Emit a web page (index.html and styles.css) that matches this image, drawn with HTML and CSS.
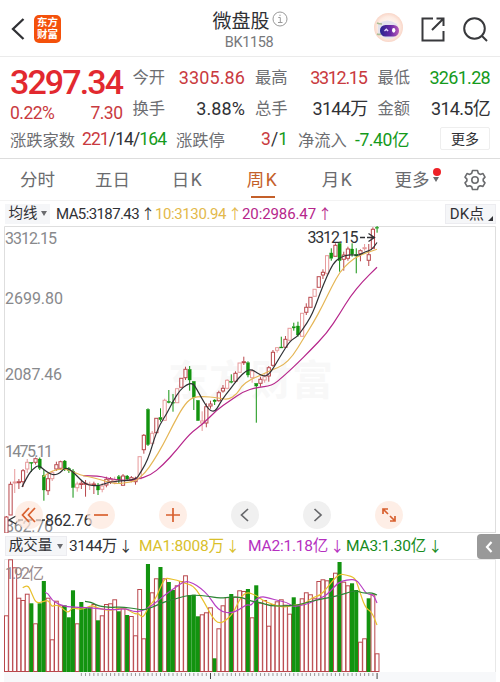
FILE: index.html
```html
<!DOCTYPE html>
<html lang="zh-CN">
<head>
    <meta charset="UTF-8">
    <meta name="viewport" content="width=device-width, initial-scale=1.0">
    <title>微盘股 BK1158</title>
    <link rel="stylesheet" href="styles.css">
</head>
<body>
    <header class="topbar">
        <div class="topbar-left">
            <svg class="back" width="14" height="24" viewBox="0 0 14 24"><path d="M12.5 2 2 12l10.500 10"/></svg>
            <div class="logo"><span>东方</span><span>财富</span></div>
        </div>
        <div class="title">
            <h1>微盘股<svg width="16" height="16" viewBox="0 0 16 16"><circle cx="8" cy="8" r="7"/><path d="M6.300 6.500h2v5M6 11.500h4.500M8 3.700v1.300"/></svg></h1>
            <p>BK1158</p>
        </div>
        <div class="topbar-right">
            <svg width="32" height="32" viewBox="0 0 32 32">
                <defs>
                    <linearGradient id="visor"><stop offset="0" stop-color="#28258f"/><stop offset=".55" stop-color="#6628a5"/><stop offset="1" stop-color="#b95bb8"/></linearGradient>
                    <radialGradient id="head"><stop offset="0" stop-color="#fff"/><stop offset=".75" stop-color="#fdebe2"/><stop offset="1" stop-color="#f9d6c8"/></radialGradient>
                </defs>
                <circle cx="14.500" cy="14.500" r="14.500" fill="url(#head)"/>
                <path d="M4 11q9-7 19 0l2 7q-5 10-14 7L4 21z" fill="#e3e2ed"/>
                <path d="M3 10q2 1 5 1M3 21q2 1 4 0" fill="none" stroke="#a9bd92" stroke-width="1.500"/>
                <rect x="6" y="12" width="19" height="11.500" rx="5.500" fill="url(#visor)"/>
                <path d="m10.500 18 1.800-1.800 1.800 1.800" fill="none" stroke="#e4d9ff" stroke-width="1.300"/>
                <ellipse cx="19.700" cy="17.300" rx="1.700" ry="2.400" fill="#fff"/>
            </svg>
            <svg class="line-icon" width="24" height="25" viewBox="0 0 24 25"><path d="M12 1.500H1.500v22H22.500V14M15.500 1.500h7V9M22.300 1.700 11 13"/></svg>
            <svg class="line-icon" width="25" height="25" viewBox="0 0 25 25"><circle cx="11.500" cy="11.500" r="10.300"/><path d="m19 19 5 5"/></svg>
        </div>
    </header>

    <section class="quote">
        <div class="quote-grid">
            <div class="last up">3297.34</div>
            <div class="cell"><span>今开</span><b class="up wide">3305.86</b></div>
            <div class="cell"><span>最高</span><b class="up tight">3312.15</b></div>
            <div class="cell"><span>最低</span><b class="down snug">3261.28</b></div>
            <div class="change up"><span>0.22%</span><span>7.30</span></div>
            <div class="cell"><span>换手</span><b class="wide">3.88%</b></div>
            <div class="cell"><span>总手</span><b class="snug">3144万</b></div>
            <div class="cell"><span>金额</span><b class="snug">314.5亿</b></div>
        </div>
        <div class="quote-row">
            <span class="label counts-label">涨跌家数</span>
            <span class="counts"><i class="up">221</i>/14/<i class="down">164</i></span>
            <span class="label limit-label">涨跌停</span>
            <span class="limit"><i class="up">3</i>/<i class="down">1</i></span>
            <span class="label flow-label">净流入</span>
            <span class="flow down">-7.40亿</span>
            <button class="more">更多</button>
        </div>
    </section>

    <nav class="tabs">
        <a>分时</a>
        <a>五日</a>
        <a class="k">日K</a>
        <a class="k active">周K</a>
        <a class="k">月K</a>
        <a class="tab-more">更多<i class="caret"></i><i class="dot"></i></a>
        <svg width="22" height="22" viewBox="0 0 22 22"><path d="M8.500 1.500h5l.8 2.800 1.900 1.100 2.800-.8 2 3.500-1.800 2v1.800l1.800 2-2 3.500-2.800-.7-1.900 1.100-.8 2.700h-5l-.8-2.700-1.900-1.100-2.800.7-2-3.500 1.900-2v-1.800l-1.900-2 2-3.500 2.800.8 1.900-1.100z"/><circle cx="11" cy="11" r="3.200"/></svg>
    </nav>

    <div class="indicator">
        <span class="chip">均线<i class="caret"></i></span>
        <span class="ma ma5">MA5:3187.43<em>↑</em></span>
        <span class="ma ma10">10:3130.94<em>↑</em></span>
        <span class="ma ma20">20:2986.47<em>↑</em></span>
        <span class="chip dk">DK点<i class="corner"></i></span>
    </div>

    <section class="price">
        <svg id="priceChart" width="492" height="307" viewBox="4 226 492 307"></svg>
        <div class="tools">
            <button><svg viewBox="0 0 28 28"><path d="m14 7-6.500 7 6.500 7M20 7l-6.500 7 6.500 7"/></svg></button>
            <button><svg viewBox="0 0 28 28"><path d="M7 14h14"/></svg></button>
            <button><svg viewBox="0 0 28 28"><path d="M7 14h14M14 7v14"/></svg></button>
            <button class="gray"><svg viewBox="0 0 28 28"><path d="m17 8-6.500 6 6.500 6"/></svg></button>
            <button class="gray"><svg viewBox="0 0 28 28"><path d="m11.500 8 6.500 6-6.500 6"/></svg></button>
            <button><svg viewBox="0 0 28 28"><path d="M8 13V8h5M8 8l5 5M20 15v5h-5M20 20l-5-5"/></svg></button>
        </div>
    </section>

    <div class="indicator volume-head">
        <span class="chip">成交量<i class="caret"></i></span>
        <span class="ma vol">3144万<em>↓</em></span>
        <span class="ma v1">MA1:8008万<em>↓</em></span>
        <span class="ma v2">MA2:1.18亿<em>↓</em></span>
        <span class="ma v3">MA3:1.30亿<em>↓</em></span>
        <span class="drawer"><svg width="8" height="12" viewBox="0 0 8 12"><path d="M6.500 1 2 6l4.500 5"/></svg></span>
    </div>

    <section class="volume">
        <svg id="volumeChart" width="492" height="123" viewBox="4 559 492 123"></svg>
    </section>

    <script src="chart.js"></script>
</body>
</html>
```

FILE: styles.css
```css
* {
    box-sizing: border-box;
}

body {
    margin: 0;
    width: 500px;
    height: 682px;
    overflow: hidden;
    background: #fff;
    color: #303135;
    font-family: Roboto, "Noto Sans CJK SC", sans-serif;
}

h1, p {
    margin: 0;
    font-weight: 400;
}

i, em, b {
    font-style: normal;
    font-weight: 400;
}

svg {
    display: block;
}

button {
    padding: 0;
    border: 0;
    font-family: inherit;
}

.up {
    color: #c93a40;
}

.down {
    color: #159a1c;
}

/* top bar */
.topbar {
    display: grid;
    grid-template-columns: 125px 1fr 125px;
    align-items: center;
    height: 57px;
    border-bottom: 1px solid #ebebeb;
}

.topbar-left {
    display: flex;
    align-items: center;
    gap: 9px;
    padding: 2px 0 0 11px;
}

.back {
    fill: none;
    stroke: #303135;
    stroke-width: 2.3;
}

.logo {
    display: flex;
    flex-direction: column;
    justify-content: center;
    align-items: center;
    width: 27px;
    height: 28px;
    border-radius: 5px;
    background: #f4510b;
    color: #fff;
    font-size: 10.5px;
    font-weight: 700;
    line-height: 12px;
}

.title {
    text-align: center;
}

.title h1 {
    display: flex;
    justify-content: center;
    align-items: center;
    gap: 2px;
    height: 27px;
    padding-top: 3px;
    font-size: 19px;
}

.title h1 svg {
    fill: none;
    stroke: #999;
    stroke-width: 1;
}

.title p {
    padding-right: 2px;
    height: 21px;
    line-height: 24px;
    color: #77787b;
    font-size: 14.5px;
    letter-spacing: -0.4px;
}

.topbar-right {
    display: flex;
    align-items: center;
    gap: 15px;
    padding-top: 2px;
    margin-left: -1px;
}

.line-icon {
    fill: none;
    stroke: #38393c;
    stroke-width: 2;
}

.line-icon:last-child {
    margin-left: 3px;
}

/* quote */
.quote {
    height: 102px;
    padding: 5px 10px 0;
    border-bottom: 1px solid #ddd;
}

.quote-grid {
    display: grid;
    grid-template-columns: repeat(4, 1fr);
    grid-template-rows: 31px 31px;
    column-gap: 10px;
}

.last {
    color: #e2292f;
    font-size: 34px;
    font-weight: 500;
    line-height: 41px;
    letter-spacing: -1.9px;
    white-space: nowrap;
}

.cell, .change {
    display: flex;
    justify-content: space-between;
    min-width: 0;
    line-height: 31px;
    white-space: nowrap;
}

.cell span, .label {
    color: #6d6e72;
    font-size: 16.3px;
}

.cell b {
    font-size: 18px;
    letter-spacing: -0.2px;
}

.cell b.wide {
    letter-spacing: 0.1px;
}

.cell b.snug {
    letter-spacing: -0.7px;
}

.cell b.tight {
    letter-spacing: -1.3px;
    margin-right: 1px;
}

.change {
    padding-top: 5px;
    font-size: 17.5px;
    letter-spacing: -0.5px;
}

.quote-row {
    display: flex;
    align-items: center;
    height: 31px;
    padding-bottom: 2px;
    font-size: 17.5px;
    white-space: nowrap;
}

.counts-label {
    width: 72px;
}

.counts {
    width: 94px;
    letter-spacing: -0.9px;
}

.limit-label {
    width: 77px;
}

.limit {
    width: 35px;
    text-align: right;
}

.flow-label {
    width: 57px;
    margin-left: 10px;
}

.flow {
    letter-spacing: -0.4px;
}

.more {
    margin-left: auto;
    width: 50px;
    height: 23px;
    border: 1px solid #eee;
    border-radius: 2px;
    background: #fff;
    color: #303135;
    font-size: 14px;
    line-height: 20px;
}

/* period tabs */
.tabs {
    display: grid;
    grid-template-columns: repeat(6, 75px) 50px;
    align-items: center;
    height: 42px;
    border-bottom: 1px solid #f3f3f3;
    color: #6a6b6e;
    font-size: 17.5px;
    text-align: center;
}

.tabs a {
    height: 41px;
    line-height: 42px;
}

.tabs .k {
    letter-spacing: 1.5px;
}

.tabs .active {
    color: #c4602a;
    background: linear-gradient(#c4602a, #c4602a) center 37px / 24px 2px no-repeat;
}

.tabs svg {
    margin: 0 0 0 14px;
    fill: none;
    stroke: #6a6b6e;
    stroke-width: 1.6;
    stroke-linejoin: round;
}

.caret {
    display: inline-block;
    border: 3px solid transparent;
    border-top: 5px solid #6a6b6e;
    border-bottom: 0;
}

.tab-more {
    position: relative;
    padding-left: 8px;
}

.tab-more .caret {
    margin-left: 3px;
    vertical-align: 4px;
}

.tab-more .dot {
    position: absolute;
    top: 9px;
    right: 9px;
    width: 8px;
    height: 8px;
    border-radius: 50%;
    background: #ee2127;
}

/* indicator rows */
.indicator {
    position: relative;
    display: flex;
    align-items: center;
    height: 25px;
    padding: 0 4px 0 5px;
    font-size: 15px;
    line-height: 20px;
    white-space: nowrap;
}

.chip {
    display: flex;
    justify-content: center;
    align-items: center;
    gap: 3px;
    width: 45px;
    height: 20px;
    background: #f5f6f8;
    font-size: 14.5px;
}

.ma {
    height: 22px;
}

.ma em {
    display: inline-block;
    width: 11px;
    margin-left: 2px;
    font-family: "Noto Sans CJK SC", sans-serif;
    font-size: 14px;
    letter-spacing: 0;
}

.ma5 {
    width: 99px;
    margin-left: 6px;
    letter-spacing: -0.6px;
}

.ma10 {
    width: 87px;
    color: #e3b94b;
    letter-spacing: -0.4px;
}

.ma20 {
    color: #b6268b;
    letter-spacing: -0.1px;
}

.dk {
    position: relative;
    width: 51px;
    margin-left: auto;
    padding-right: 7px;
    border: 1px solid #ececf0;
    font-size: 15px;
}

.corner {
    position: absolute;
    right: 2px;
    bottom: 2px;
    border-left: 5px solid transparent;
    border-bottom: 5px solid #303135;
}

.price {
    position: relative;
    height: 308px;
    padding-left: 4px;
}

.price text, .volume text {
    font-size: 16px;
}

.tools {
    position: absolute;
    left: 15px;
    top: 275px;
    display: flex;
    gap: 44px;
}

.tools button {
    width: 28px;
    height: 28px;
    border-radius: 50%;
    background: rgba(253, 231, 220, 0.7);
}

.tools .gray {
    background: #f0f0f0;
}

.tools path {
    fill: none;
    stroke: #d8602f;
    stroke-width: 1.7;
}

.tools .gray path {
    stroke: #66676a;
}

.volume-head {
    height: 25px;
    padding: 0 0 1px 5px;
}

.volume-head .chip {
    width: 62px;
    border: 1px solid #ececf0;
    gap: 5px;
    font-size: 14.5px;
}

.volume-head .ma {
    height: 23px;
    font-size: 15.5px;
    letter-spacing: -0.2px;
}

.volume-head .vol {
    width: 70px;
    margin-left: 2px;
    letter-spacing: -0.5px;
}

.volume-head .v1 {
    width: 109px;
    color: #d9c02b;
}

.volume-head .v2 {
    width: 98px;
    color: #b52fc0;
}

.volume-head .v3 {
    color: #168a20;
}

.drawer {
    position: absolute;
    right: 0;
    top: 0;
    display: flex;
    justify-content: center;
    align-items: center;
    width: 23px;
    height: 25px;
    border-radius: 4px 0 0 4px;
    background: #999;
}

.drawer path {
    fill: none;
    stroke: #fff;
    stroke-width: 2.2;
}

.volume {
    padding-left: 4px;
}
```

FILE: chart.js
```js
const NS = 'http://www.w3.org/2000/svg';
const RED = '#b9474c';
const PINK = '#e79a9b';
const GREEN = '#12930f';
const STEP = 4.165;
const FIRST = 6.4;

// [direction, body top, body bottom, high, low]
const candles = [
    ['r',517,533,516,533],['r',484.3,515,481.7,515],['r',482,482.700,469,493],['r',481.700,482.400,479,489],
    ['r',470.7,481.7,469,487],['r',462.300,469,459,473],['g',462.300,463,462,472],['r',458.700,462.300,457.5,464.5],
    ['g',459,468.300,457.5,470],['g',475.300,490,470,500.700],['r',478.700,490.700,473,495],['r',472.700,478.700,470.700,481],
    ['r',464.700,469,461.700,471],['r',461.700,468.300,460.700,470],['g',461,469,460,471],['g',468.300,470.700,467,473],
    ['g',471,487.700,469,497.700],['r',484,487.700,481.700,491.700],['r',483.300,484.500,480,489],['r',483.300,484,480,496.700],
    ['r',484,485,481.700,490],['r',484,484.700,481.700,494],['g',485,490,483,495],['r',486,489.300,483,492.300],
    ['r',479.300,485,476.700,487.300],['r',479,481.700,477,484],['r',480,482.300,476.700,484.300],['g',476.700,480,475,483.300],
    ['r',476,485.300,474,485.300],['g',476,479.300,475,481],['r',477.700,480.300,476,482.300],['r',478.300,481.700,476.700,484.700],
    ['r',456.700,478.700,456.700,478.700],['r',435.300,449.700,434,453.700],['g',409.300,444.700,408.300,446],['r',433.300,443.300,431,444.700],
    ['r',418.300,432.700,418.300,432.700],['g',417.300,419.700,408.300,421.700],['r',400.300,420.300,398.700,420.300],['g',401.300,402.700,390,403.300],
    ['g',402.300,403.300,394,411.700],['r',388.700,402.700,388.700,402.700],['r',378.300,387.300,378.300,387.300],['r',369.300,377.700,366.700,380],
    ['g',369.300,380,366,390.700],['g',381.300,397.700,381.300,410],['g',400.300,420.700,400.300,420.700],['r',421,423,411.300,431],
    ['r',406.700,423,403.300,427.300],['r',404,406,400.700,408.700],['g',400,401.700,399.300,405],['r',392.700,400.700,390.700,401.700],
    ['r',388.300,391,385,392.700],['r',380.300,388.300,379.300,389.300],['g',381.300,382.300,374.300,383.300],['r',373.300,381.300,371.300,382.700],
    ['r',363,372.300,363,372.300],['r',361.700,362.700,356.700,365],['g',362.700,375,361.300,377.300],['r',371,377.700,369.300,382.700],
    ['g',383.300,386,383.300,422.700],['r',379.300,383.300,376.700,386.700],['r',376.700,380,374.300,382.700],['r',367.700,376,366,381.700],
    ['r',352.300,365.300,350,366.700],['r',347.700,350.300,347.300,352.700],['g',347,348,336.700,348],['r',339.300,347.300,336,347.300],
    ['r',328.300,340.300,328.300,340.300],['g',326.700,328,322.700,330.700],['g',326,335,321.700,336.700],['r',313.300,336.300,313.300,336.300],
    ['r',307.300,312.300,303.300,315],['r',297.300,307.300,297.300,307.300],['r',289.300,296.300,289.300,296.300],['r',276.700,287.300,276.700,287.300],
    ['r',272.300,275,269.300,279],['r',255.700,273.300,255.700,275.700],['g',253,258.300,248.300,260.700],['r',245.300,256.300,243.300,256.300],
    ['g',243.300,260.700,241.700,271.700],['r',255,259.300,251.700,270.700],['r',249,258.300,246.700,260.700],['g',249,254.300,243.300,256.700],
    ['g',254.300,256,248.300,273.300],['r',250.700,253.700,249.300,261.300],['r',247.700,248.700,244,250.700],['r',254.700,260.300,244,266],
    ['r',229.300,248.300,227.300,248.300],['g',227.300,228.300,226,232.700]
];

// [direction, top of the bar]
const volumes = [
    ['r',615.3],['r',559.3],['r',567.3],['r',597.7],['r',600],['r',593.7],['g',603.3],['r',623.3],['g',603.3],['g',581],
    ['r',597.7],['r',639.3],['r',600.7],['r',605.3],['g',605.3],['g',617.3],['g',590.3],['r',623.3],['g',602],['g',607.3],
    ['g',607.3],['r',604],['g',620.3],['r',615.3],['r',604],['r',603.3],['r',599.3],['g',611.3],['r',608.3],['g',615],
    ['r',616],['r',635.3],['r',589],['r',638.3],['g',564],['r',592.3],['r',578.3],['g',567],['r',578.3],['g',582],
    ['g',590],['r',585.3],['r',581],['r',575.3],['g',595],['g',594.7],['g',616.3],['r',614.3],['r',612.3],['r',607.3],
    ['g',658.3],['r',628.3],['r',605.3],['r',597],['g',594],['r',596.7],['r',590.3],['r',591],['g',589],['r',617.3],
    ['g',585.3],['r',602.7],['r',600],['r',625.7],['r',604],['r',601.3],['r',599.3],['r',604.7],['r',613.7],['g',597.3],
    ['g',605.3],['r',598.3],['r',592.3],['r',594.3],['r',598.3],['r',581],['r',579.3],['r',580.3],['g',578],['r',572.7],
    ['g',562],['r',581.7],['r',585.3],['g',583.3],['g',590],['r',641.7],['r',638.3],['g',598.3],['r',594.3],['r',653.3]
];

const ma5 = [[22,487],[28,475],[33,469],[38.5,465],[43,469],[50,474],[55,475],[60,473],[63.5,469],[67,468],[72,471],[77,476],[83,482],[88,485],[97,486],[104,484],[110,482],[120,481],[136,479.7],[140,473.3],[145,465],[150,453.3],[154,439.3],[160,424],[166.7,414],[173.3,400.7],[180,390],[186.7,384.7],[191.7,383],[195,386],[201.7,398.3],[208.3,409.3],[213.3,411.7],[216.7,409.3],[221.7,400],[230,389.3],[238.3,378.3],[246,370.7],[251.7,369.3],[256.7,372.7],[263.3,376.5],[268.3,375],[273.3,368.3],[280,356.7],[290,340.7],[297.3,336.7],[303.3,328.3],[310,318.3],[315,307.3],[320,293.3],[326.7,276.7],[333.3,263.3],[340,257.3],[350,254.3],[358.3,255.7],[365,251.7],[371.7,250],[377,242.5]];
const ma10 = [[43.3,476.7],[48,473],[54,470.5],[63,468.5],[71.7,471],[80,475],[90,477],[100,479.5],[108,482],[117,484],[130,482],[136,480.7],[145,473],[153,461.7],[163,445],[173,425],[183,406.7],[191.7,397.3],[203,396.5],[217,397.5],[228,400],[237,394],[241.7,386],[250,379.7],[263,374.3],[273,369.3],[283,365.7],[293,355.7],[303,339.3],[313,323.3],[323,305],[331.7,286.7],[340,271.7],[350,261.7],[358,256],[366.7,252.7],[377,249.3]];
const ma20 = [[83,475.7],[100,476],[110,479],[125,480.5],[136,479.7],[150,475.7],[163,465],[176.7,450],[190,433.3],[203,424],[216.7,410],[230,400.7],[243,391.7],[256.7,387.3],[271.7,386],[283,376.7],[296.7,364],[310,350.7],[326.7,333.3],[340,313.3],[350,296.7],[363,281],[377,267.3]];

const vma1 = [[22.7,587.7],[27.7,584],[31.7,593.3],[36,603.3],[43.3,601.7],[48.3,600],[51.7,606.7],[55,605],[60,606],[68.3,613.7],[71.7,607.3],[81.7,610],[91.7,605],[96.7,607.7],[110,611],[123.3,606.7],[135,614.3],[138.3,613.3],[143.3,618.3],[148.3,606.7],[155,600],[159.3,590],[165,577.7],[170,579],[176.7,580],[185,583.3],[193.3,585.7],[200,595],[206.7,606.7],[212.3,617.3],[218.3,623.3],[224.3,621.7],[233.3,613.3],[240,598.3],[246.7,591.7],[256.7,595.7],[263.3,600.7],[270,603.3],[276.7,606],[286.7,607.3],[296.7,604.3],[303.3,605],[311.7,597.7],[320,595.7],[326.7,588.3],[333.3,580],[339.3,574],[346.7,575],[355,577.7],[358.3,586.7],[365,607.7],[371.7,611.7],[377,625]];
const vma2 = [[45,592.3],[48.3,593.3],[51.7,600],[60,605],[70,607.3],[86.7,607.3],[100,609],[115,610],[125,608.3],[135,612.3],[145,610],[155,603.3],[165,595],[175,587.7],[185,580.7],[193.3,583.3],[200,587.7],[208.3,595],[215,605.7],[221.7,611.7],[231.7,613.3],[240,609],[246.7,604.3],[251,605.7],[255,600],[261.7,596.3],[270,598.3],[278.3,600.7],[286.7,602.3],[293.3,606.7],[300,605.7],[310,603.3],[316.7,599.3],[323.3,597.3],[330,591.7],[338.3,582.3],[346.7,580],[356,579.3],[361.7,586.7],[366.7,594.3],[373.3,594.3],[377,603]];
const vma3 = [[85,601.3],[91.7,602],[96.7,605.7],[110,607.7],[121.7,606.7],[138.3,609.3],[145,610],[155,606],[165,601.7],[175,599],[185,596],[193.3,595],[208.3,596],[218.3,598.3],[228.3,597.3],[241.7,597],[251,601.3],[260,602.3],[270,606],[283.3,606],[296.7,605.3],[310,601.7],[320,599.3],[330,597.3],[343.3,594.3],[355,590.3],[363.3,593.3],[371.7,592.7],[377,595]];

function add(parent, tag, attrs, text) {
    const el = document.createElementNS(NS, tag);
    for (const key in attrs) el.setAttribute(key, attrs[key]);
    if (text) el.textContent = text;
    parent.appendChild(el);
    return el;
}

function label(svg, text, x, y, width, fill) {
    add(svg, 'text', { x, y, textLength: width, fill: fill || '#88898c' }, text);
}

// smooth line through the middle of every segment
function curve(svg, pts, color) {
    let d = `M${pts[0]}`;
    for (let i = 1; i < pts.length - 1; i++) {
        const mx = (pts[i][0] + pts[i + 1][0]) / 2;
        const my = (pts[i][1] + pts[i + 1][1]) / 2;
        d += `Q${pts[i]} ${mx},${my}`;
    }
    d += `L${pts[pts.length - 1]}`;
    add(svg, 'path', { d, fill: 'none', stroke: color, 'stroke-width': 1.2 });
}

function drawPrice() {
    const svg = document.getElementById('priceChart');
    add(svg, 'path', { d: 'M4.5 533V226.5H495.5V533M4 532.5H496', fill: 'none', stroke: '#dedede' });
    add(svg, 'text', { x: 168, y: 395, textLength: 165, fill: '#f8f8f8', style: 'font-size:41px;font-weight:700' }, '东方财富');

    label(svg, '3312.15', 5, 244, 52);
    label(svg, '2699.80', 5, 303.5, 58);
    label(svg, '2087.46', 5, 380, 57);
    label(svg, '1475.11', 5, 457, 48);
    label(svg, '862.76', 5, 531.5, 48);

    candles.forEach(([dir, top, bottom, high, low], i) => {
        const x = FIRST + i * STEP;
        const h = Math.max(bottom - top, 1);
        const color = dir === 'g' ? GREEN : (i % 3 === 2 ? PINK : RED);
        add(svg, 'path', { d: `M${x} ${high}V${top}M${x} ${bottom}V${low}`, stroke: color });
        add(svg, 'rect', {
            x: x - 1.6, y: top, width: 3.2, height: h,
            fill: dir === 'g' ? GREEN : '#fff', stroke: color, 'stroke-width': dir === 'g' ? 0.3 : 1
        });
    });

    curve(svg, ma20, '#b6268b');
    curve(svg, ma10, '#e5b655');
    curve(svg, ma5, '#303135');

    label(svg, '3312.15', 307.5, 242.5, 51, '#303135');
    add(svg, 'path', { d: 'M360 237.500H365M367 237.500H374M368.500 233.500 374.500 237.500 368.500 241.500', fill: 'none', stroke: '#303135', 'stroke-width': 1.3 });
    add(svg, 'path', { d: 'M16 516 9 520 16 524M18 520H23M27 520H32M36 520H41M42 520H45', fill: 'none', stroke: '#303135', 'stroke-width': 1.3 });
    label(svg, '862.76', 45, 525.5, 47.5, '#303135');
}

function drawVolume() {
    const svg = document.getElementById('volumeChart');
    const base = 671.5;
    add(svg, 'rect', { x: 4, y: 672, width: 492, height: 10, fill: '#f7f8fa' });
    add(svg, 'path', { d: 'M4.5 672V559.500H495.500V672', fill: 'none', stroke: '#e8e8e8' });

    volumes.forEach(([dir, top], i) => {
        const x = FIRST + i * STEP;
        if (dir === 'g') {
            add(svg, 'rect', { x: x - 2.1, y: top, width: 4.1, height: base - top + 0.5, fill: GREEN });
        } else {
            add(svg, 'rect', {
                x: x - 1.9, y: top + 0.5, width: 3.8, height: base - top - 0.5,
                fill: '#fff', stroke: RED
            });
        }
        if (i > 17) {
            const major = i === 49 || i === 89;
            add(svg, 'path', { d: `M${x} 673V${major ? 679 : 676}`, stroke: major ? '#444' : '#999' });
        }
    });

    label(svg, '1.92亿', 5, 579, 39, '#98898b');

    curve(svg, vma1, '#e8c12d');
    curve(svg, vma2, '#b83fc4');
    curve(svg, vma3, '#2c8434');
}

drawPrice();
drawVolume();
```
